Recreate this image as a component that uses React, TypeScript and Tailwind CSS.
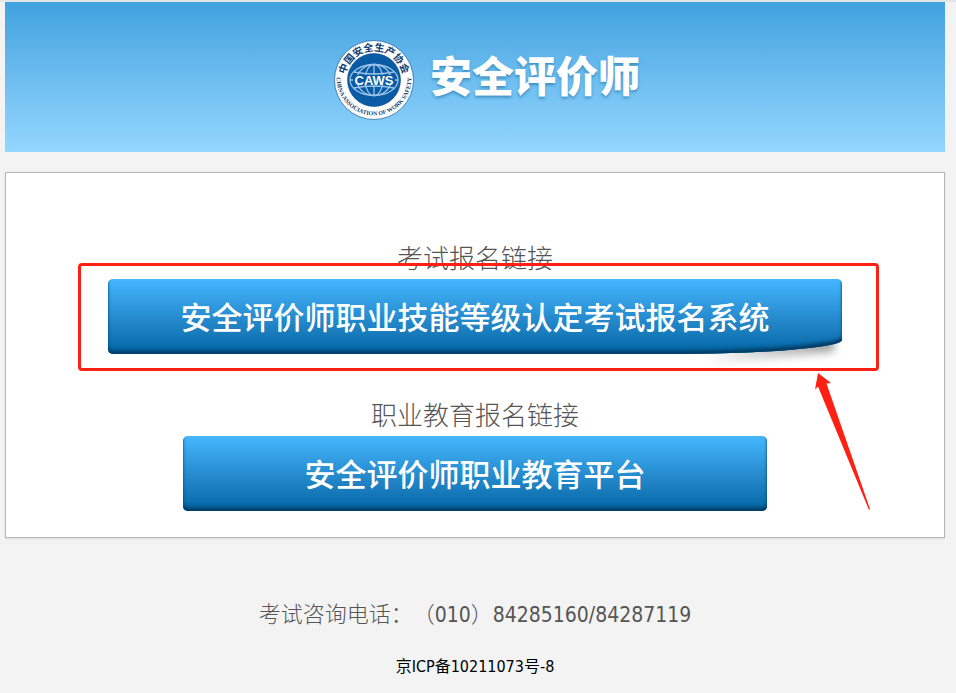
const Logo = () => (
  <svg viewBox="0 0 80 80" className="w-20 h-20 shrink-0" role="img" aria-label="CAWS">
    <defs>
      <path id="arc-top" d="M 11 40 A 29 29 0 0 1 69 40" />
      <path id="arc-bottom" d="M 2.7 34 A 37.5 37.5 0 1 0 77.3 34" />
    </defs>
    <circle cx="40" cy="40" r="39.5" fill="#fff" stroke="#2d6ca8" strokeWidth="0.8" />
    <circle cx="40" cy="40" r="26.5" fill="#0a5ba6" stroke="#0b4c8c" strokeWidth="0.6" />
    <g fill="none" stroke="#9cc4e8" strokeWidth="1.3">
      <ellipse cx="40" cy="40" rx="24" ry="15.5" />
      <ellipse cx="40" cy="40" rx="17" ry="15.5" />
      <ellipse cx="40" cy="40" rx="9" ry="15.5" />
      <path d="M40 24V56M16 40H64M20 32Q40 36 60 32M20 48Q40 44 60 48" />
    </g>
    <rect x="19" y="35" width="42" height="10" rx="3" fill="#0a5ba6" />
    <text
      x="40"
      y="44.5"
      textAnchor="middle"
      fill="#fff"
      className="font-['Liberation_Sans',sans-serif] text-[13px] font-bold"
    >
      CAWS
    </text>
    <text fill="#123f73" className="font-['Noto_Sans_CJK_SC',sans-serif] text-[10px] font-bold">
      <textPath href="#arc-top" startOffset="50%" textAnchor="middle">
        中国安全生产协会
      </textPath>
    </text>
    <text fill="#123f73" className="font-['Liberation_Serif',serif] text-[6px] font-bold">
      <textPath href="#arc-bottom" startOffset="50%" textAnchor="middle">
        CHINA ASSOCIATION OF WORK SAFETY
      </textPath>
    </text>
  </svg>
);

const buttonStyle =
  "relative flex items-center justify-center h-[75px] w-full text-[31px] font-medium text-white whitespace-nowrap bg-linear-to-b from-[#45b7ff] to-[#0065a3] shadow-[inset_0_-4px_4px_-1px_#003a60,inset_0_-2px_2px_#0a5d94]";

export default function App() {
  return (
    <div className="min-h-screen border-t-2 border-[#e3e5e6] bg-[#f3f3f3] pl-[5px] pr-[11px] font-['Noto_Sans_CJK_SC',sans-serif]">
      <header className="flex h-[150px] items-center justify-center gap-4 bg-linear-to-b from-[#3fa2df] to-[#94d7ff] pl-6 pt-1.5">
        <Logo />
        <h1 className="pb-3 text-[42px] leading-none font-black text-white [text-shadow:0_2px_3px_#3c8fc3]">
          安全评价师
        </h1>
      </header>

      <main className="mt-5 flex flex-col items-center border border-[#b5b5b5] bg-white px-5 pt-16 pb-[26px] shadow-[0_1px_2px_#dddddd]">
        <h2 className="text-[26px] leading-10 font-light text-[#555555]">考试报名链接</h2>
        <div className="relative mt-0.5 w-full max-w-[734px]">
          {/* lifted corner shadow */}
          <div className="absolute right-2 -bottom-1 h-4 w-32 bg-linear-to-r from-transparent to-[#999999] blur-[4px] rotate-[-6deg]" />
          <a href="#exam" className={`${buttonStyle} rounded-[5px] rounded-br-[180px_14px]`}>
            安全评价师职业技能等级认定考试报名系统
          </a>
          <div className="pointer-events-none absolute -top-4 -right-[37px] -bottom-[17px] -left-[30px] rounded-[4px] border-3 border-[#ff2014]" />
          <svg
            viewBox="0 0 58 140"
            className="pointer-events-none absolute top-[93px] -right-[30px] h-[140px] w-[58px]"
            aria-hidden="true"
          >
            <path d="M4 1L17 11L12.5 11.5L56 137L55 138L4 14.5L1 17.5Z" fill="#ff2014" />
          </svg>
        </div>

        <h2 className="mt-10 text-[26px] leading-10 font-light text-[#555555]">
          职业教育报名链接
        </h2>
        <div className="mt-0.5 w-full max-w-[584px]">
          <a href="#education" className={`${buttonStyle} rounded-[5px]`}>
            安全评价师职业教育平台
          </a>
        </div>
      </main>

      <footer className="pt-[58px] text-center">
        <p className="text-[22px] leading-8 font-light text-[#555555] [text-spacing-trim:space-all]">
          考试咨询电话：（
          <span className="font-['DejaVu_Sans_Condensed','DejaVu_Sans',sans-serif] text-[21px] font-normal">010</span>
          ）
          <span className="font-['DejaVu_Sans_Condensed','DejaVu_Sans',sans-serif] text-[21px] font-normal">
            84285160/84287119
          </span>
        </p>
        <p className="mt-6 font-['DejaVu_Sans_Condensed','Noto_Sans_CJK_SC',sans-serif] text-base leading-6 text-black">
          京ICP备10211073号-8
        </p>
      </footer>
    </div>
  );
}
